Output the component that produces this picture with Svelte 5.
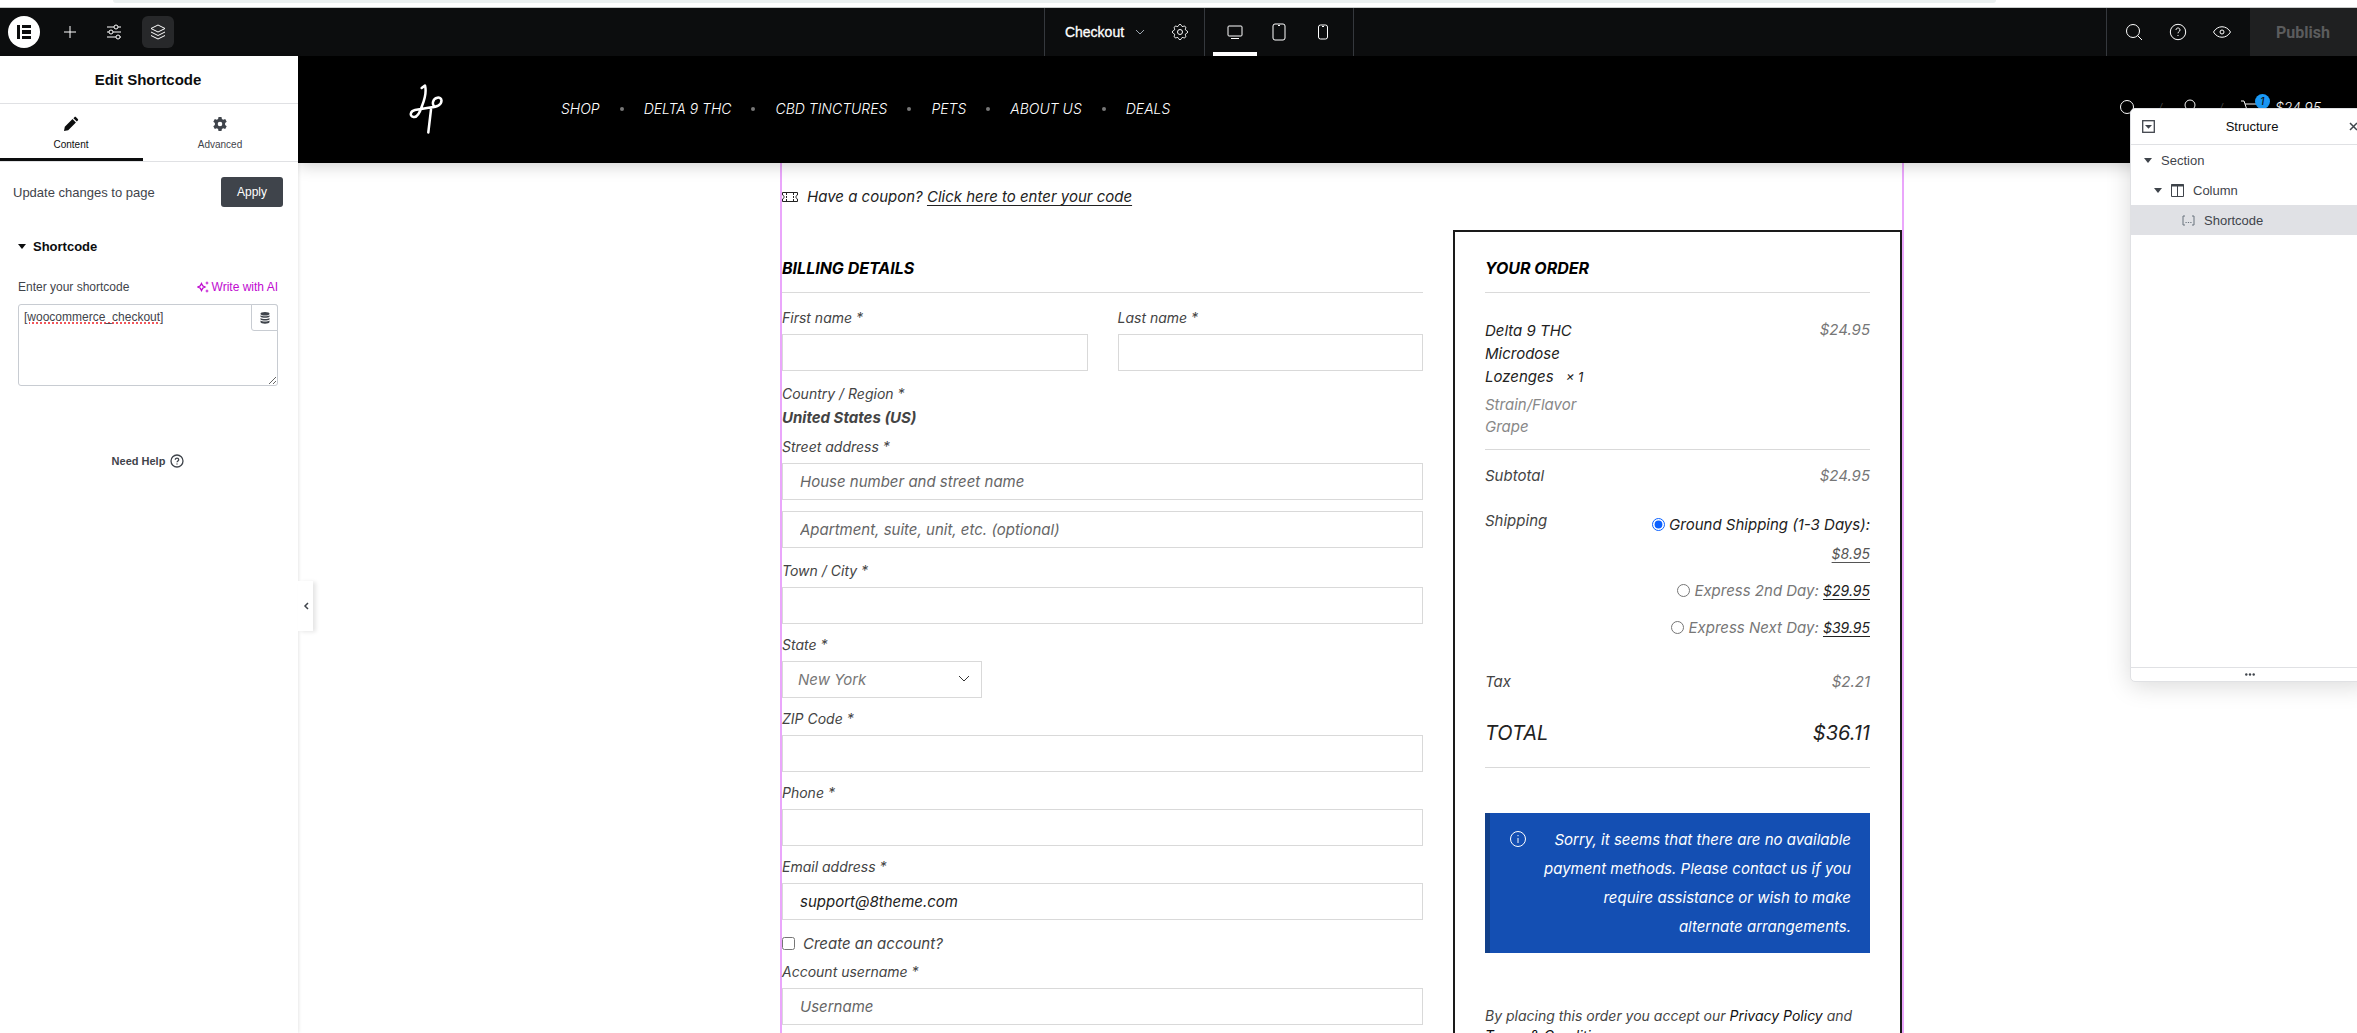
<script>
const devices = ['desktop', 'tablet', 'mobile']
const menu = ['SHOP', 'DELTA 9 THC', 'CBD TINCTURES', 'PETS', 'ABOUT US', 'DEALS']

let device = 'desktop'
let tab = 'content'
let shortcode = '[woocommerce_checkout]'
let shipping = 'ground'
let createAccount = false

let billing = {
  firstName: '',
  lastName: '',
  street: '',
  apartment: '',
  city: '',
  state: 'NY',
  zip: '',
  phone: '',
  email: 'support@8theme.com',
  username: ''
}
</script>

<div class="window">
<div class="chrome"><div class="omnibox"></div></div>

<div class="shell">
<header class="topbar">
  <div class="bar-left">
    <button class="logo" aria-label="Elementor logo">
      <svg width="32" height="32" viewBox="0 0 32 32">
        <circle cx="16" cy="16" r="16" fill="#fff" />
        <path fill="#0c0d0e" d="M9 9h3v14H9zM14 9h9v3h-9zM14 14h9v4h-9zM14 20h9v3h-9z" />
      </svg>
    </button>
    <button class="tool" aria-label="Add element">
      <svg width="20" height="20" viewBox="0 0 20 20"><path d="M10 4v12M4 10h12" /></svg>
    </button>
    <button class="tool" aria-label="Site settings">
      <svg width="20" height="20" viewBox="0 0 20 20">
        <path d="M3 5h7M14 5h3M3 10h2M9 10h8M3 15h9M16 15h1" />
        <circle cx="12" cy="5" r="2" /><circle cx="7" cy="10" r="2" /><circle cx="14" cy="15" r="2" />
      </svg>
    </button>
    <button class="tool on" aria-label="Structure">
      <svg width="20" height="20" viewBox="0 0 20 20">
        <path d="M10 3l7 3.500-7 3.500-7-3.500zM3 10l7 3.500 7-3.500M3 13.500l7 3.500 7-3.500" />
      </svg>
    </button>
  </div>

  <div class="bar-center">
    <button class="document">
      Checkout
      <svg width="12" height="12" viewBox="0 0 12 12"><path d="M2 4l4 4 4-4" stroke="#9da5ae" /></svg>
    </button>
    <button class="tool gear" aria-label="Page settings">
      <svg width="20" height="20" viewBox="0 0 20 20">
        <path d="M8.600 3.400c.350-1.300 2.450-1.300 2.800 0a1.500 1.500 0 0 0 2.200.900c1.200-.700 2.700.800 2 2a1.500 1.500 0 0 0 .9 2.200c1.400.350 1.400 2.650 0 3a1.500 1.500 0 0 0-.9 2.200c.7 1.200-.8 2.700-2 2a1.500 1.500 0 0 0-2.200.9c-.350 1.400-2.450 1.400-2.800 0a1.500 1.500 0 0 0-2.200-.9c-1.200.7-2.700-.8-2-2a1.500 1.500 0 0 0-.9-2.200c-1.400-.350-1.400-2.650 0-3a1.500 1.500 0 0 0 .9-2.200c-.7-1.200.8-2.700 2-2a1.500 1.500 0 0 0 2.200-.9z" />
        <circle cx="10" cy="10" r="2.500" />
      </svg>
    </button>
    <div class="devices">
      {#each devices as name}
        <button class="device" class:active={device === name} aria-label={name} on:click={() => device = name}>
          <svg width="20" height="20" viewBox="0 0 20 20">
            {#if name === 'desktop'}
              <rect x="3" y="4" width="14" height="10" rx="1" /><path d="M6 16.500h8" />
            {:else if name === 'tablet'}
              <rect x="4" y="2" width="12" height="16" rx="2" /><path d="M9 3.500h2" />
            {:else}
              <rect x="5.500" y="3" width="9" height="14" rx="2" /><path d="M9 4.500h2" />
            {/if}
          </svg>
        </button>
      {/each}
    </div>
  </div>

  <div class="bar-right">
    <div class="utilities">
      <button class="tool" aria-label="Finder">
        <svg width="20" height="20" viewBox="0 0 20 20"><circle cx="9" cy="9" r="6.500" /><path d="M13.600 13.600L18 18" /></svg>
      </button>
      <button class="tool" aria-label="Help">
        <svg width="20" height="20" viewBox="0 0 20 20">
          <circle cx="10" cy="10" r="7.700" />
          <path d="M8 8c0-2.700 4-2.700 4 0 0 1.700-2 1.500-2 3.300M10 13v1" />
        </svg>
      </button>
      <button class="tool" aria-label="Preview changes">
        <svg width="20" height="20" viewBox="0 0 20 20">
          <path d="M1.500 10c4-7 13-7 17 0-4 7-13 7-17 0z" /><circle cx="10" cy="10" r="2" />
        </svg>
      </button>
    </div>
    <button class="publish" disabled>Publish</button>
  </div>
</header>

<div class="workspace">
  <aside class="panel">
    <h1>Edit Shortcode</h1>
    <div class="tabs">
      <button class:active={tab === 'content'} on:click={() => tab = 'content'}>
        <svg width="16" height="16" viewBox="0 0 16 16" fill="currentColor">
          <path d="M1 15l.800-4.200 7.700-7.700 3.400 3.400-7.700 7.700zM10.400 2.200l1-1c.5-.5 1.200-.5 1.700 0l1.700 1.700c.5.5.5 1.200 0 1.700l-1 1z" />
        </svg>
        Content
      </button>
      <button class:active={tab === 'advanced'} on:click={() => tab = 'advanced'}>
        <svg width="16" height="16" viewBox="0 0 16 16" fill="currentColor">
          <path fill-rule="evenodd" d="M6.500 1h3l.4 2 1.300.8 2-.7 1.500 2.600-1.600 1.400v1.800l1.600 1.400-1.500 2.600-2-.7-1.300.8-.4 2h-3l-.4-2-1.300-.8-2 .7-1.500-2.600 1.600-1.400V7.100L1.300 5.700l1.500-2.600 2 .7L6.100 3zM8 5.700a2.300 2.300 0 1 0 0 4.600 2.300 2.300 0 0 0 0-4.600z" />
        </svg>
        Advanced
      </button>
    </div>

    <div class="update">
      <span>Update changes to page</span>
      <button>Apply</button>
    </div>

    <section class="controls">
      <h2><span class="caret"></span>Shortcode</h2>
      <div class="control-head">
        <label for="shortcode">Enter your shortcode</label>
        <button class="ai">
          <svg width="12" height="12" viewBox="0 0 12 12">
            <path d="M4.500 2.500l1.200 2.300L8 6 5.700 7.200 4.500 9.500 3.300 7.200 1 6l2.300-1.200z" fill="none" stroke="currentColor" stroke-width="1.300" />
            <path d="M10 0l.6 1.400L12 2l-1.400.6L10 4l-.6-1.400L8 2l1.400-.6zM10 8l.6 1.400 1.400.6-1.400.6L10 12l-.6-1.400L8 10l1.400-.6z" fill="currentColor" />
          </svg>
          Write with AI
        </button>
      </div>
      <div class="editor">
        <textarea id="shortcode" bind:value={shortcode} spellcheck="false"></textarea>
        <button class="dynamic" aria-label="Dynamic tags">
          <svg width="10" height="12" viewBox="0 0 10 12" fill="#3f444b">
            <ellipse cx="5" cy="1.800" rx="4.500" ry="1.800" />
            <path d="M.5 3.200c1.500 1.300 7.500 1.300 9 0v1.600c-1.500 1.300-7.500 1.300-9 0zM.5 5.900c1.500 1.300 7.500 1.300 9 0v1.600c-1.500 1.300-7.500 1.300-9 0zM.5 8.600c1.500 1.300 7.500 1.300 9 0v1.400c0 2.300-9 2.300-9 0z" />
          </svg>
        </button>
      </div>
    </section>

    <a class="help" href="#help">
      Need Help
      <svg width="14" height="14" viewBox="0 0 14 14" fill="none" stroke="currentColor">
        <circle cx="7" cy="7" r="6" stroke-width="1.300" />
        <path d="M5.300 5.700c0-2.200 3.400-2.200 3.400 0C8.700 7 7 6.900 7 8.300M7 9.500v1" stroke-width="1.300" />
      </svg>
    </a>

    <button class="collapse" aria-label="Hide panel">
      <svg width="6" height="10" viewBox="0 0 6 10"><path d="M5 2L2 5l3 3" fill="none" stroke="#3f444b" stroke-width="1.500" /></svg>
    </button>
  </aside>

  <main class="preview">
    <div class="site-header">
      <a class="brand" href="#home" aria-label="Home">
        <svg width="34" height="50" viewBox="0 0 34 50" fill="none" stroke="#fff" stroke-width="2.500" stroke-linecap="round" stroke-linejoin="round">
          <path d="M12.700 4L16 1.500C18 9 15 17 13 22c-2 6-5 12-8.500 11C0 32 1.500 27 6 26l15-2.500c7-.5 11.500-2.500 11.500-7C32 12 25 13 24 18c-.5 3 1 4.500 2.500 4.500M22 25.500l-2.700 23" />
        </svg>
      </a>
      <nav>
        {#each menu as item}
          <a href="#menu">{item}</a>
        {/each}
      </nav>
      <div class="account">
        <svg width="20" height="20" viewBox="0 0 20 20"><circle cx="8" cy="8" r="6.500" /><path d="M13 13l6 6" /></svg>
        <i>/</i>
        <svg width="20" height="20" viewBox="0 0 20 20"><circle cx="10" cy="6" r="5" /><path d="M1 19c1-9 17-9 18 0" /></svg>
        <i>/</i>
        <a class="cart" href="#cart">
          <svg width="20" height="20" viewBox="0 0 20 20"><path d="M0 2h3l4 12h10l2-9H4" /></svg>
          <b>1</b>
          <span>$24.95</span>
        </a>
      </div>
    </div>

    <div class="section">
      <p class="coupon">
        <svg width="16" height="12" viewBox="0 0 16 12" fill="none" stroke="#222">
          <path d="M.5 1.500h15v2.500c-2 0-2 4 0 4v2.500H.5V8c2 0 2-4 0-4z" />
          <path d="M4.500 2v8M11.500 2v8" stroke-dasharray="2 1" />
        </svg>
        <span>Have a coupon? <a href="#coupon">Click here to enter your code</a></span>
      </p>

      <div class="checkout">
        <form class="billing">
          <h3>BILLING DETAILS</h3>
          <div class="pair">
            <div class="field">
              <label for="first">First name *</label>
              <input id="first" type="text" bind:value={billing.firstName}>
            </div>
            <div class="field">
              <label for="last">Last name *</label>
              <input id="last" type="text" bind:value={billing.lastName}>
            </div>
          </div>
          <div class="country">
            <span>Country / Region *</span>
            <strong>United States (US)</strong>
          </div>
          <div class="field street">
            <label for="street">Street address *</label>
            <input id="street" type="text" placeholder="House number and street name" bind:value={billing.street}>
            <input type="text" aria-label="Apartment" placeholder="Apartment, suite, unit, etc. (optional)" bind:value={billing.apartment}>
          </div>
          <div class="field">
            <label for="city">Town / City *</label>
            <input id="city" type="text" bind:value={billing.city}>
          </div>
          <div class="field">
            <label for="state">State *</label>
            <div class="select">
              <select id="state" bind:value={billing.state}>
                <option value="NY">New York</option>
              </select>
              <svg width="12" height="8" viewBox="0 0 12 8"><path d="M1 1l5 5 5-5" fill="none" stroke="#333" /></svg>
            </div>
          </div>
          <div class="field">
            <label for="zip">ZIP Code *</label>
            <input id="zip" type="text" bind:value={billing.zip}>
          </div>
          <div class="field">
            <label for="phone">Phone *</label>
            <input id="phone" type="tel" bind:value={billing.phone}>
          </div>
          <div class="field">
            <label for="email">Email address *</label>
            <input id="email" type="email" bind:value={billing.email}>
          </div>
          <label class="create">
            <input type="checkbox" bind:checked={createAccount}>
            Create an account?
          </label>
          <div class="field">
            <label for="username">Account username *</label>
            <input id="username" type="text" placeholder="Username" bind:value={billing.username}>
          </div>
        </form>

        <section class="order">
          <h3>YOUR ORDER</h3>
          <table>
            <tbody>
              <tr class="item">
                <th>
                  <div class="product">Delta 9 THC Microdose Lozenges <small>× 1</small></div>
                  <div class="variation">Strain/Flavor<br>Grape</div>
                </th>
                <td>$24.95</td>
              </tr>
              <tr class="subtotal">
                <th>Subtotal</th>
                <td>$24.95</td>
              </tr>
              <tr class="shipping">
                <th>Shipping</th>
                <td>
                  <label class:chosen={shipping === 'ground'}>
                    <input type="radio" name="shipping" value="ground" bind:group={shipping}>
                    Ground Shipping (1-3 Days): <u>$8.95</u>
                  </label>
                  <label class:chosen={shipping === 'second'}>
                    <input type="radio" name="shipping" value="second" bind:group={shipping}>
                    Express 2nd Day: <u>$29.95</u>
                  </label>
                  <label class:chosen={shipping === 'next'}>
                    <input type="radio" name="shipping" value="next" bind:group={shipping}>
                    Express Next Day: <u>$39.95</u>
                  </label>
                </td>
              </tr>
              <tr class="tax">
                <th>Tax</th>
                <td>$2.21</td>
              </tr>
              <tr class="total">
                <th>TOTAL</th>
                <td>$36.11</td>
              </tr>
            </tbody>
          </table>
          <div class="notice">
            <svg width="18" height="18" viewBox="0 0 18 18" fill="none" stroke="#fff">
              <circle cx="9" cy="9" r="7.500" /><path d="M9 8v5M9 5v1.200" />
            </svg>
            <p>Sorry, it seems that there are no available payment methods. Please contact us if you require assistance or wish to make alternate arrangements.</p>
          </div>
          <p class="terms">By placing this order you accept our <a href="#privacy">Privacy Policy</a> and <a href="#terms">Terms &amp; Conditions</a></p>
        </section>
      </div>
    </div>
  </main>
</div>

<aside class="structure">
  <header>
    <button aria-label="Expand all elements">
      <svg width="13" height="13" viewBox="0 0 13 13"><rect x=".7" y=".7" width="11.600" height="11.600" fill="none" stroke="#3f444b" stroke-width="1.300" /><path d="M3 5h7L6.500 8.800z" fill="#3f444b" /></svg>
    </button>
    <h2>Structure</h2>
    <button aria-label="Close structure">
      <svg width="9" height="9" viewBox="0 0 9 9"><path d="M1 1l7 7M8 1L1 8" stroke="#3f444b" stroke-width="1.500" /></svg>
    </button>
  </header>
  <ul>
    <li><span class="caret"></span>Section</li>
    <li class="column">
      <span class="caret"></span>
      <svg width="13" height="13" viewBox="0 0 13 13" fill="none" stroke="#3f444b"><path d="M.5.500h12v12H.5zM6.500 1v12" /><path d="M0 1.500h13" stroke-width="2" /></svg>
      Column
    </li>
    <li class="leaf">
      <svg width="13" height="11" viewBox="0 0 13 11" fill="none" stroke="#69727d"><path d="M3 1H1v9h2M10 1h2v9h-2" /><path d="M3.500 7.500h1.200M5.900 7.500h1.200M8.300 7.500h1.200" /></svg>
      Shortcode
    </li>
  </ul>
  <footer>
    <svg width="10" height="3" viewBox="0 0 10 3" fill="#3f444b"><circle cx="1.300" cy="1.500" r="1.200" /><circle cx="5" cy="1.500" r="1.200" /><circle cx="8.700" cy="1.500" r="1.200" /></svg>
  </footer>
</aside>
</div>
</div>

<style>
  :global(body){
    margin: 0;
    background: #fff;
  }

  *{
    box-sizing: border-box;
  }

  .window{
    height: 100vh;
    overflow: hidden;
    display: flex;
    flex-direction: column;
    font-family: "Liberation Sans", Arial, sans-serif;
    font-size: 13px;
    color: #3f444b;
  }

  button{
    padding: 0;
    border: 0;
    background: none;
    font: inherit;
    color: inherit;
    display: flex;
    align-items: center;
    justify-content: center;
  }

  h1, h2, h3, p, ul{
    margin: 0;
    padding: 0;
  }

  a{
    color: inherit;
    text-decoration: none;
  }

  svg{
    flex: none;
  }

  .chrome{
    flex: none;
    height: 8px;
    border-bottom: 1px solid #c9cccb;
  }
  .omnibox{
    height: 3px;
    margin: 0 361px 0 113px;
    border-radius: 0 0 8px 8px;
    background: #ebf0f0;
  }

  /* the editor is a little wider than the window and runs off its right edge */
  .shell{
    position: relative;
    flex: 1;
    min-height: 0;
    margin-right: -29px;
    display: flex;
    flex-direction: column;
  }

  /* top bar */
  .topbar{
    flex: none;
    display: flex;
    height: 48px;
    background: #0c0d0e;
    color: #fff;
  }
  .topbar svg{
    fill: none;
    stroke: #fff;
  }
  .topbar .logo svg{
    stroke: none;
  }
  .bar-left{
    flex: 1 1 12px;
    display: flex;
    align-items: center;
    gap: 12px;
    padding-left: 8px;
  }
  .logo{
    margin-right: 2px;
  }
  .tool{
    width: 32px;
    height: 32px;
    border-radius: 6px;
  }
  .tool.on{
    background: #27282a;
  }
  .bar-center{
    display: flex;
    align-items: center;
    border: solid #35383d;
    border-width: 0 1px;
  }
  .document{
    gap: 10px;
    padding: 0 18px 0 20px;
    font-size: 14px;
    -webkit-text-stroke: 0.3px #fff;
  }
  .gear{
    margin-right: 8px;
  }
  .devices{
    display: flex;
    align-self: stretch;
    padding: 0 8px;
    border-left: 1px solid #35383d;
  }
  .device{
    width: 44px;
    border-top: 4px solid transparent;
    border-bottom: 4px solid transparent;
  }
  .device.active{
    border-bottom-color: #fff;
  }
  .bar-right{
    flex: 1 1 0;
    display: flex;
    justify-content: flex-end;
  }
  .utilities{
    display: flex;
    align-items: center;
    gap: 12px;
    padding: 0 12px 0 11px;
    border-left: 1px solid #35383d;
  }
  .publish{
    width: 136px;
    justify-content: flex-start;
    padding-left: 26px;
    background: #1f2021;
    color: #5b5c5d;
    font: bold 16px Roboto, sans-serif;
  }

  .workspace{
    flex: 1;
    min-height: 0;
    display: grid;
    grid-template-columns: 298px 1fr;
  }

  /* left panel */
  .panel{
    position: relative;
    z-index: 2;
    background: #fff;
    box-shadow: 0 0 4px rgba(0, 0, 0, .15);
  }
  .panel h1{
    height: 48px;
    padding-right: 2px;
    border-bottom: 1px solid #e0e1e4;
    font-size: 15px;
    line-height: 48px;
    text-align: center;
    color: #0c0d0e;
  }
  .tabs{
    display: grid;
    grid-template-columns: 143px 1fr;
    height: 58px;
    border-bottom: 1px solid #e0e1e4;
  }
  .tabs button{
    flex-direction: column;
    gap: 7px;
    padding: 3px 1px 0 0;
    border-bottom: 3px solid transparent;
    font-size: 10px;
  }
  .tabs .active{
    color: #0c0d0e;
    border-bottom-color: #0c0d0e;
  }
  .update{
    display: flex;
    align-items: center;
    justify-content: space-between;
    padding: 15px 15px 15px 13px;
  }
  .update button{
    width: 62px;
    height: 30px;
    border-radius: 3px;
    background: #3f444b;
    color: #fff;
    font-size: 12px;
  }
  .controls{
    padding: 14px 20px 0 18px;
  }
  .controls h2{
    display: flex;
    align-items: center;
    gap: 7px;
    height: 20px;
    font-size: 13px;
    color: #0c0d0e;
  }
  .caret{
    border: 4px solid transparent;
    border-top: 5px solid currentColor;
    border-bottom: 0;
  }
  .control-head{
    display: flex;
    align-items: center;
    justify-content: space-between;
    height: 20px;
    margin: 21px 0 7px;
    font-size: 12px;
  }
  .ai{
    gap: 3px;
    color: #c00bd0;
  }
  .editor{
    position: relative;
  }
  textarea{
    display: block;
    width: 100%;
    height: 82px;
    padding: 4px 5px;
    border: 1px solid #c8ccd2;
    border-radius: 3px;
    background: #fff;
    color: #3f444b;
    font: 12px/16px "Liberation Sans", Arial, sans-serif;
    text-decoration: underline dotted #f2555a 2px;
    outline: none;
    resize: vertical;
  }
  .dynamic{
    position: absolute;
    top: 0;
    right: 0;
    width: 27px;
    height: 27px;
    border: 1px solid #c8ccd2;
    border-radius: 0 3px 0 3px;
    background: #fff;
  }
  .help{
    display: flex;
    align-items: center;
    justify-content: center;
    gap: 5px;
    margin-top: 68px;
    padding-right: 2px;
    font-size: 11px;
    font-weight: bold;
  }
  .collapse{
    position: absolute;
    top: 525px;
    left: 298px;
    width: 15px;
    height: 50px;
    background: #fff;
    box-shadow: 3px 1px 4px rgba(0, 0, 0, .1);
  }

  /* page preview */
  .preview{
    min-width: 0;
    overflow: hidden;
    font-family: Inter, sans-serif;
    font-size: 15px;
    font-style: italic;
    color: #444;
  }
  .site-header{
    position: relative;
    display: flex;
    align-items: center;
    height: 107px;
    padding: 0 65px 2px 111px;
    background: #000;
    box-shadow: 0 2px 16px rgba(0, 0, 0, .2);
    color: #fff;
    font-size: 14px;
    font-weight: 300;
  }
  .brand{
    height: 50px;
    margin-right: 118px;
  }
  nav{
    display: flex;
    align-items: center;
  }
  nav a + a::before{
    content: "";
    display: inline-block;
    width: 4px;
    height: 4px;
    margin: 0 20px 3px 20px;
    border-radius: 50%;
    background: #777;
  }
  .account{
    display: flex;
    align-items: center;
    gap: 18px;
    margin-left: auto;
  }
  .account svg{
    fill: none;
    stroke: #fff;
  }
  .account i{
    color: #444;
  }
  .cart{
    position: relative;
    display: flex;
    gap: 14px;
  }
  .cart b{
    position: absolute;
    top: -5px;
    left: 14px;
    width: 15px;
    height: 15px;
    border-radius: 50%;
    background: #1a9cfb;
    color: #111;
    font-size: 10px;
    font-weight: 500;
    line-height: 15px;
    text-align: center;
  }

  .section{
    width: 1124px;
    margin: 0 auto;
    height: 100%;
    border: solid #eaa6fb;
    border-width: 0 2px;
  }
  .coupon{
    display: flex;
    align-items: center;
    gap: 9px;
    padding-top: 22px;
    line-height: 24px;
    color: #222;
  }
  .coupon a{
    text-decoration: underline;
    text-underline-offset: 3px;
  }
  .checkout{
    display: grid;
    grid-template-columns: 641px 449px;
    justify-content: space-between;
    padding-top: 21px;
  }
  h3{
    height: 37px;
    border-bottom: 1px solid #dadada;
    font-size: 16px;
    font-weight: 700;
    line-height: 24px;
    color: #000;
  }
  .billing{
    padding-top: 26px;
  }
  .billing h3{
    margin-bottom: 13px;
  }
  .pair{
    display: grid;
    grid-template-columns: 1fr 1fr;
    gap: 30px;
  }
  .field{
    display: flex;
    flex-direction: column;
    margin-bottom: 9px;
  }
  .field label{
    height: 24px;
    margin-bottom: 4px;
    font-size: 14px;
    line-height: 24px;
  }
  .field input, .field select{
    width: 100%;
    height: 37px;
    padding: 0 17px;
    border: 1px solid #d9d9d9;
    border-radius: 0;
    outline: none;
    background: #fff;
    color: #222;
    font: italic 15px Inter, sans-serif;
  }
  .field input::placeholder{
    color: #666;
  }
  .street{
    margin-bottom: 11px;
  }
  .street input + input{
    margin-top: 11px;
  }
  .country{
    display: flex;
    flex-direction: column;
    margin: 2px 0 5px;
    font-size: 14px;
    line-height: 24px;
  }
  .country strong{
    font-size: 15px;
  }
  .select{
    position: relative;
    width: 200px;
  }
  .field select{
    appearance: none;
    padding: 0 15px;
    color: #777;
  }
  .select svg{
    position: absolute;
    top: 14px;
    right: 12px;
  }
  .create{
    display: flex;
    align-items: center;
    gap: 8px;
    height: 24px;
    margin: 11px 0 5px;
  }
  .create input{
    margin: 0;
    width: 13px;
    height: 13px;
  }

  .order{
    height: 1000px;
    padding: 24px 30px;
    border: 2px solid #1a1a1a;
  }
  table{
    width: 100%;
    border-collapse: collapse;
  }
  th, td{
    padding: 0;
    vertical-align: top;
    font-weight: normal;
    text-align: left;
    line-height: 24px;
  }
  th{
    width: 150px;
  }
  td{
    text-align: right;
    color: #777;
  }
  .item th{
    padding: 26px 0 11px;
  }
  .item td{
    padding-top: 25px;
  }
  .item{
    border-bottom: 1px solid #d9d9d9;
  }
  .product{
    width: 120px;
    line-height: 23px;
    color: #222;
  }
  .product small{
    margin-left: 8px;
    font-size: 13px;
  }
  .variation{
    margin-top: 5px;
    line-height: 22px;
    color: #888;
  }
  .subtotal > *{
    padding: 14px 0 21px;
  }
  .shipping td{
    padding-top: 1px;
  }
  .shipping label{
    display: block;
    margin-bottom: 8px;
    line-height: 29px;
    color: #777;
  }
  .shipping .chosen{
    color: #222;
  }
  .shipping u{
    font-size: 14px;
    text-underline-offset: 3px;
    color: #222;
  }
  .chosen u{
    color: #555;
  }
  .shipping input{
    width: 13px;
    height: 13px;
    margin: 0;
    vertical-align: -1px;
    accent-color: #0a60ff;
  }
  .tax > *{
    padding: 20px 0 27px;
  }
  .total > *{
    padding-bottom: 22px;
    font-size: 20px;
    color: #222;
  }
  .total{
    border-bottom: 1px solid #d9d9d9;
  }
  .notice{
    display: flex;
    justify-content: space-between;
    margin-top: 45px;
    padding: 12px 19px;
    border-left: 5px solid #12408a;
    background: #144fb3;
    color: #fff;
    line-height: 29px;
    text-align: right;
  }
  .notice svg{
    margin-top: 5px;
  }
  .notice p{
    width: 314px;
  }
  .terms{
    margin-top: 53px;
    font-size: 14px;
    line-height: 20px;
  }
  .terms a{
    color: #111;
  }

  /* floating structure window */
  .structure{
    position: absolute;
    top: 100px;
    right: 16px;
    z-index: 5;
    display: flex;
    flex-direction: column;
    width: 240px;
    height: 574px;
    border: 1px solid #e0e1e4;
    border-radius: 5px;
    background: #fff;
    box-shadow: 0 4px 24px rgba(0, 0, 0, .15);
  }
  .structure header{
    display: flex;
    align-items: center;
    justify-content: space-between;
    height: 36px;
    padding: 0 11px;
    border-bottom: 1px solid #e0e1e4;
  }
  .structure h2{
    font-size: 13px;
    font-weight: normal;
    color: #0c0d0e;
  }
  .structure ul{
    flex: 1;
    list-style: none;
  }
  .structure li{
    display: flex;
    align-items: center;
    gap: 9px;
    height: 30px;
    padding-left: 13px;
  }
  .structure .column{
    padding-left: 23px;
  }
  .structure .leaf{
    padding-left: 51px;
    background: #e0e1e5;
  }
  .structure footer{
    display: flex;
    align-items: center;
    justify-content: center;
    height: 14px;
    border-top: 1px solid #e0e1e4;
  }
</style>
